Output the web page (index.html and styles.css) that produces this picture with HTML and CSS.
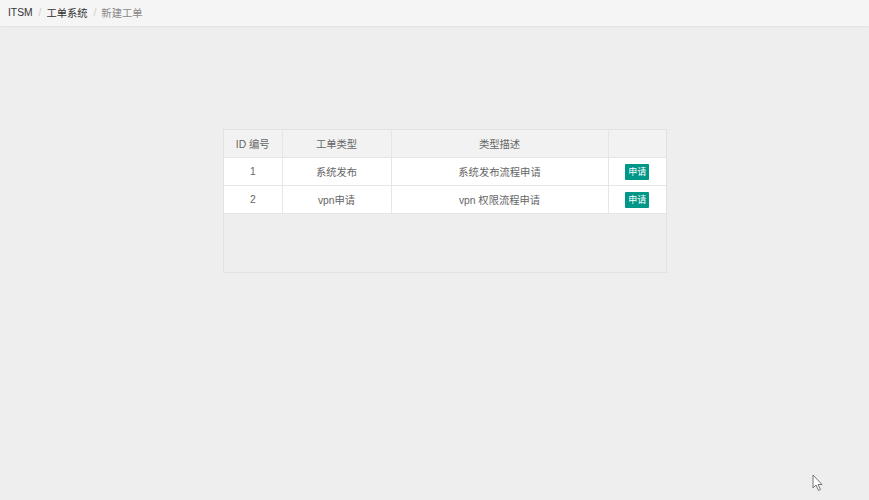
FILE: index.html
```html
<!DOCTYPE html>
<html lang="zh">
<head>
<meta charset="utf-8">
<title>新建工单</title>
<link rel="stylesheet" href="styles.css">
</head>
<body>
<div class="crumb">
  <span class="c-item c-root">ITSM</span>
  <span class="c-sep">/</span>
  <span class="c-item c-root">工单系统</span>
  <span class="c-sep">/</span>
  <span class="c-item c-cur">新建工单</span>
</div>
<main class="main">
  <div class="tview">
    <table class="tbl">
      <colgroup>
        <col class="w1"><col class="w2"><col class="w3"><col class="w4">
      </colgroup>
      <thead>
        <tr><th>ID 编号</th><th>工单类型</th><th>类型描述</th><th></th></tr>
      </thead>
      <tbody>
        <tr><td>1</td><td>系统发布</td><td>系统发布流程申请</td><td><span class="btn">申请</span></td></tr>
        <tr><td>2</td><td>vpn申请</td><td>vpn 权限流程申请</td><td><span class="btn">申请</span></td></tr>
      </tbody>
    </table>
    <div class="filler"></div>
  </div>
</main>
<svg class="cursor" width="12" height="18" viewBox="0 0 12 18"><path d="M1 1 L1 14 L4 11 L6.5 16.5 L8.5 15.5 L6 10.5 L10 10.5 Z" fill="#fff" stroke="#777" stroke-width="1"/></svg>
</body>
</html>
```
FILE: styles.css
```css
html, body { margin: 0; padding: 0; }
body {
  background: #eeeeee;
  font-family: "Liberation Sans", "Noto Sans CJK SC", sans-serif;
  width: 869px;
  height: 500px;
  overflow: hidden;
  position: relative;
}
.crumb {
  height: 26px;
  background: #f5f5f5;
  box-shadow: 0 1px 2px rgba(0,0,0,0.06);
  display: flex;
  align-items: center;
  padding-left: 8px;
  font-size: 10.3px;
  box-sizing: border-box;
  padding-bottom: 1px;
}
.c-root { color: #333; }
.c-cur { color: #888; }
.c-sep { color: #ccc; margin: 0 5px 0 6px; font-size: 10px; }
.main {
  padding-top: 103px;
  padding-left: 223px;
}
.tview {
  width: 442px;
  border: 1px solid #e2e2e2;
  background: #eeeeee;
}
.tbl {
  border-collapse: collapse;
  width: 100%;
  table-layout: fixed;
  font-size: 10.3px;
  color: #666;
}
.w1 { width: 58px; }
.w2 { width: 109px; }
.w3 { width: 217px; }
.w4 { width: 58px; }
.tbl th, .tbl td {
  height: 27px;
  padding: 0;
  text-align: center;
  border: 1px solid #e6e6e6;
  font-weight: normal;
}
.tbl tr > :first-child { border-left: 0; }
.tbl tr > :last-child { border-right: 0; }
.tbl thead th { border-top: 0; background: #f2f2f2; color: #666; }
.tbl tbody td { background: #fff; }
.tbl tbody tr:last-child td { border-bottom: 1px solid #e6e6e6; }
.btn {
  display: inline-block;
  background: #009688;
  color: #fff;
  font-size: 9px;
  line-height: 16px;
  height: 16px;
  padding: 0 3px;
  border-radius: 1px;
  vertical-align: middle;
}
.filler { height: 58px; }
.cursor { position: absolute; left: 812px; top: 474px; }
```
